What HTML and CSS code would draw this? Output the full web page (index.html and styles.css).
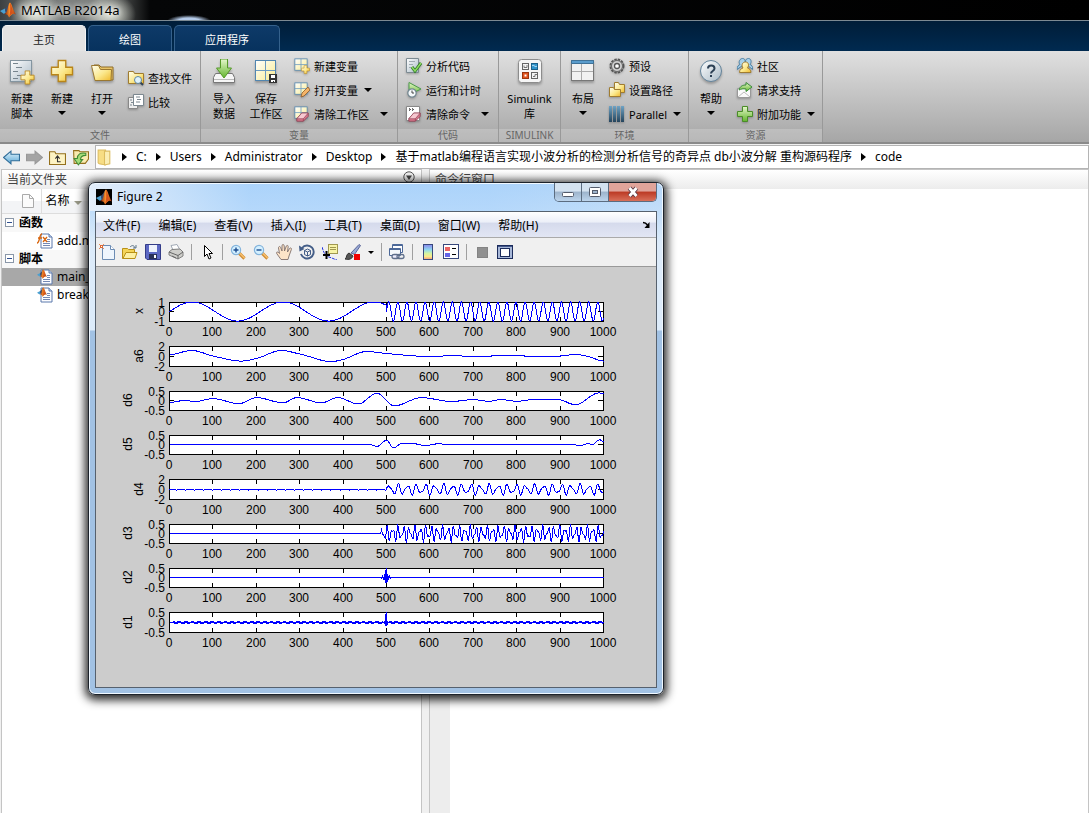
FILE: index.html
```html
<!DOCTYPE html>
<html lang="zh-CN">
<head>
    <meta charset="UTF-8">
    <meta name="viewport" content="width=device-width, initial-scale=1.0">
    <title>MATLAB R2014a</title>
    <link rel="stylesheet" href="styles.css">
</head>
<body>
    <svg class="defs" aria-hidden="true">
        <defs>
            <linearGradient id="gold" x1="0" y1="0" x2="1" y2="1"><stop offset="0" stop-color="#fffff0"/><stop offset="0.55" stop-color="#fbe88c"/><stop offset="1" stop-color="#efb92c"/></linearGradient>
            <linearGradient id="cells" x1="0" y1="0" x2="1" y2="1"><stop offset="0" stop-color="#ffffff"/><stop offset="1" stop-color="#faec90"/></linearGradient>
            <linearGradient id="paper" x1="0" y1="0" x2="1" y2="1"><stop offset="0" stop-color="#ffffff"/><stop offset="1" stop-color="#a9bac6"/></linearGradient>
            <linearGradient id="green" x1="0" y1="0" x2="0" y2="1"><stop offset="0" stop-color="#e6f8cc"/><stop offset="1" stop-color="#62b52c"/></linearGradient>
            <linearGradient id="flame" x1="0" y1="0" x2="1" y2="0"><stop offset="0" stop-color="#7a1408"/><stop offset="0.5" stop-color="#ff9a2e"/><stop offset="1" stop-color="#a32a0c"/></linearGradient>
            <linearGradient id="blue" x1="0" y1="0" x2="0" y2="1"><stop offset="0" stop-color="#e2f4fd"/><stop offset="1" stop-color="#5aa8d6"/></linearGradient>
            <linearGradient id="bars" x1="0" y1="0" x2="0" y2="1"><stop offset="0" stop-color="#6fa3c4"/><stop offset="1" stop-color="#24445c"/></linearGradient>
            <linearGradient id="rainbow" x1="0" y1="0" x2="0" y2="1"><stop offset="0" stop-color="#8a86ec"/><stop offset="0.35" stop-color="#8fd8f0"/><stop offset="0.6" stop-color="#d4f4a0"/><stop offset="0.8" stop-color="#fbe88a"/><stop offset="1" stop-color="#f29a7a"/></linearGradient>
            <symbol id="i-matlab" viewBox="0 0 16 16">
                <path d="M0 9l5-2.500L7.500 9 4 12z" fill="#4a9fd0"/>
                <path d="M5 6.500C7 6 8 2 10 .500L8 9l-2 2-1-2z" fill="#3a4c6c"/>
                <path d="M4 12c1 0 2-1 3-3 1-3 1.500-8 3-8.500 2 1 3 8 6 12-3-1.500-4-.500-7 3C8.500 13 6.500 12 4 12z" fill="url(#flame)"/>
                <path d="M10 .500c1.200 2 2.500 7 3 11-1.500 0-2.500 2-4 4 1.500-5 1.500-10 1-15z" fill="#d4521c"/>
            </symbol>
            <symbol id="i-grid" viewBox="0 0 16 16">
                <rect x="1" y="1" width="14" height="13" fill="url(#cells)" stroke="#5286b0" stroke-width=".900"/>
                <path d="M8 1v13M1 7.500h14" stroke="#6b9ac0" stroke-width=".900"/>
            </symbol>
            <symbol id="i-plus" viewBox="0 0 16 16">
                <path d="M5.500 1h5v4.500H15v5h-4.500V15h-5v-4.500H1v-5h4.500z" fill="url(#gold)" stroke="#b98518" stroke-width=".900"/>
            </symbol>
            <symbol id="i-eraser" viewBox="0 0 16 16">
                <path d="M1 12l6-7h8v4l-6 6H1z" fill="#d8788c" stroke="#8c3c50"/>
                <path d="M1 12l6-7h8l-6 7z" fill="#f6c8d0" stroke="#8c3c50" stroke-width=".800"/>
                <path d="M9 12v3" stroke="#8c3c50" stroke-width=".800"/>
            </symbol>
            <symbol id="i-mfile" viewBox="0 0 16 16">
                <path d="M4 1h8l3 3v11H4z" fill="#fdfdff" stroke="#5a78ac"/>
                <path d="M12 1v3h3" fill="#cfdcf0" stroke="#5a78ac"/>
                <path d="M6 10.500h7M6 12.500h7M10 6.500h3M10 8.500h3" stroke="#7488b4"/>
            </symbol>
            <symbol id="i-lens" viewBox="0 0 16 16">
                <path d="M9 9l5.500 5.500" stroke="#d08c30" stroke-width="3.200"/>
                <path d="M9.500 9l5 5" stroke="#f8c070" stroke-width="1.400"/>
                <circle cx="6" cy="6" r="4.600" fill="#d4f0ff" stroke="#84b4dc" stroke-width="1.200"/>
            </symbol>
        </defs>
    </svg>

    <header class="titlebar">
        <svg class="icon16"><use href="#i-matlab"/></svg>
        <h1>MATLAB R2014a</h1>
    </header>

    <nav class="tabs">
        <button class="tab active">主页</button>
        <button class="tab">绘图</button>
        <button class="tab wide">应用程序</button>
    </nav>

    <div class="ribbon">
        <section class="group g-file">
            <div class="tools">
                <button class="big">
                    <svg viewBox="0 0 28 28"><rect x="2.500" y="1.500" width="21" height="21" fill="url(#paper)" stroke="#8495a0"/><path d="M5 4.500h5M8 8.500h6M5 12.500h5M9 16.500h4M5 19.500h5" stroke="#77858e"/><use href="#i-plus" x="12" y="11" width="15" height="15"/></svg>
                    <span>新建<br>脚本</span>
                </button>
                <button class="big">
                    <svg viewBox="0 0 28 28"><use href="#i-plus" x="2" y="0" width="24" height="24"/></svg>
                    <span>新建</span><i class="caret"></i>
                </button>
                <button class="big">
                    <svg viewBox="0 0 28 28"><path d="M6 6h5l2 2h12v13H8z" fill="#e8c468" stroke="#8f6c28"/><path d="M3.500 6.500h7l2 4h11l-.500 11h-16z" fill="url(#gold)" stroke="#9a7730"/></svg>
                    <span>打开</span><i class="caret"></i>
                </button>
                <div class="stack pair">
                    <button class="small"><svg viewBox="0 0 16 16"><path d="M.500 1.500h5l1 2h9v10H.500z" fill="url(#gold)" stroke="#a07c30"/><path d="M12 12l3 3" stroke="#345" stroke-width="2"/><circle cx="10" cy="10" r="3.500" fill="#dff2fc" stroke="#5c86a4"/></svg>查找文件</button>
                    <button class="small"><svg viewBox="0 0 16 16"><path d="M.500 3.500h9v11h-9z" fill="#eee" stroke="#888"/><path d="M5.500.500h10v11h-10z" fill="#fff" stroke="#7c8890"/><path d="M8 3h4M9 5.500h4M8 8h4M2 6h2M3 8.500h2M2 11h2" stroke="#7c8890"/></svg>比较</button>
                </div>
            </div>
            <h2>文件</h2>
        </section>

        <section class="group g-var">
            <div class="tools">
                <button class="big">
                    <svg viewBox="0 0 28 28"><path d="M5.500 14.500h17l2 4v5h-21v-5z" fill="#f6f6f6" stroke="#777"/><path d="M4 20.500h20" stroke="#bbb"/><path d="M10.500 0h7v9h4l-7.500 10L6.500 9h4z" fill="url(#green)" stroke="#559a28"/></svg>
                    <span>导入<br>数据</span>
                </button>
                <button class="big">
                    <svg viewBox="0 0 28 28"><rect x="3.500" y="1.500" width="20" height="20" fill="url(#cells)" stroke="#5286b0"/><path d="M13.500 2v19M4 11.500h19" stroke="#6b9ac0"/><path d="M17 15h8v9h-8z" fill="#333"/><path d="M19 16h4v3h-4zM19 21h4v2h-1v-1h-1v1h-2z" fill="#fff"/></svg>
                    <span>保存<br>工作区</span>
                </button>
                <div class="stack">
                    <button class="small"><svg viewBox="0 0 16 16"><use href="#i-grid" x="0" y="0" width="14" height="14"/><use href="#i-plus" x="7" y="7" width="9" height="9"/></svg>新建变量</button>
                    <button class="small"><svg viewBox="0 0 16 16"><use href="#i-grid" x="0" y="0" width="14" height="14"/><path d="M7 15l1-4 6-6 2 3-6 6z" fill="#f4b468" stroke="#8a5a28" stroke-width=".800"/></svg>打开变量<i class="caret"></i></button>
                    <button class="small split"><svg viewBox="0 0 16 16"><use href="#i-grid" x="0" y="0" width="14" height="14"/><use href="#i-eraser" x="1" y="3" width="15" height="13"/></svg>清除工作区<i class="caret"></i></button>
                </div>
            </div>
            <h2>变量</h2>
        </section>

        <section class="group g-code">
            <div class="tools">
                <div class="stack">
                    <button class="small"><svg viewBox="0 0 16 16"><path d="M.500.500h12v14H.500z" fill="url(#paper)" stroke="#7c8a92"/><path d="M3 3.500h6M3 6.500h4M3 9.500h3" stroke="#a0abb2"/><path d="M6 9l3 4 6-8" fill="none" stroke="#2f7a2a" stroke-width="3"/><path d="M6 9l3 4 6-8" fill="none" stroke="#8fdc60" stroke-width="1.400"/></svg>分析代码</button>
                    <button class="small"><svg viewBox="0 0 16 16"><path d="M3 .500l12 6.500-12 6z" fill="url(#green)" stroke="#4a9a48"/><circle cx="6" cy="11" r="4.200" fill="#f4f8fa" stroke="#71858f" stroke-width="1.200"/><path d="M6 8.500V11h2" fill="none" stroke="#444"/></svg>运行和计时</button>
                    <button class="small split"><svg viewBox="0 0 16 16"><path d="M.500.500h13v14H.500z" fill="#fff" stroke="#888"/><path d="M3 2.500l1.500 1L3 4.500M6 2.500l1.500 1L6 4.500" fill="none" stroke="#222"/><use href="#i-eraser" x="1" y="3" width="15" height="13"/></svg>清除命令<i class="caret"></i></button>
                </div>
            </div>
            <h2>代码</h2>
        </section>

        <section class="group g-sim">
            <div class="tools">
                <button class="big wide">
                    <svg viewBox="0 0 28 28"><rect x="2.500" y=".500" width="23" height="23" rx="3" fill="#f6f6f6" stroke="#8c8c8c"/><rect x="6.500" y="4.500" width="6" height="6" fill="#f4f4f4" stroke="#666"/><rect x="15.500" y="4.500" width="6" height="6" fill="#2f94cc" stroke="#1c5f88"/><rect x="6.500" y="13.500" width="6" height="6" fill="#e0521c" stroke="#9a3410"/><rect x="15.500" y="13.500" width="6" height="6" fill="#f4f4f4" stroke="#666"/><path d="M8 6.500v2h3V6M17 17.500h2v-2h2" fill="none" stroke="#777"/><path d="M16 7c2-2 3 2 5 0" fill="none" stroke="#d0ecfc"/><rect x="8.500" y="15.500" width="2" height="2" fill="#fff"/></svg>
                    <span>Simulink<br>库</span>
                </button>
            </div>
            <h2>SIMULINK</h2>
        </section>

        <section class="group g-env">
            <div class="tools">
                <button class="big">
                    <svg viewBox="0 0 28 28"><rect x="2.500" y="1.500" width="22" height="20" fill="#f1f1f1" stroke="#777"/><path d="M2.500 1.500h22v3h-22z" fill="#5a9ccc" stroke="#3f7298"/><path d="M3 12.500h21M12.500 5v16" stroke="#aaa"/></svg>
                    <span>布局</span><i class="caret"></i>
                </button>
                <div class="stack">
                    <button class="small"><svg viewBox="0 0 16 16"><circle cx="8" cy="8" r="6.500" fill="none" stroke="#555" stroke-width="2" stroke-dasharray="2.400 1"/><circle cx="8" cy="8" r="5.500" fill="#d0d0d0" stroke="#666"/><circle cx="8" cy="8" r="2.500" fill="#fff" stroke="#555" stroke-width="1.300"/></svg>预设</button>
                    <button class="small"><svg viewBox="0 0 16 16"><path d="M5.500.500h4l1 2h5v8h-10z" fill="url(#gold)" stroke="#a07c30"/><path d="M.500 5.500h4l1 2h6v7H.500z" fill="url(#gold)" stroke="#a07c30"/></svg>设置路径</button>
                    <button class="small"><svg viewBox="0 0 16 16"><path d="M0 0h3v16H0zM4 0h3v16H4zM8 0h3v16H8zM12 0h3v16h-3z" fill="url(#bars)"/></svg>Parallel<i class="caret"></i></button>
                </div>
            </div>
            <h2>环境</h2>
        </section>

        <section class="group g-res">
            <div class="tools">
                <button class="big">
                    <svg viewBox="0 0 28 28"><circle cx="14" cy="12" r="10.500" fill="url(#paper)" stroke="#64839a"/><path d="M11 9.500c0-4 6.500-4 6.500 0 0 2.500-3.500 2.500-3.500 5" fill="none" stroke="#2c4054" stroke-width="2"/><path d="M13 16h2v2h-2z" fill="#2c4054"/></svg>
                    <span>帮助</span><i class="caret"></i>
                </button>
                <div class="stack">
                    <button class="small"><svg viewBox="0 0 16 16"><path d="M0 11.500C0 8 2 7 3 6.500 1 4 3 .500 5.500.500S9 3 7.500 6z" fill="#a8d0ea" stroke="#4c80a4"/><path d="M9 6C7.500 3 9 .500 11.500.500S15 4 13 6.500c1.500.500 3 2 2.500 5z" fill="#a8d0ea" stroke="#4c80a4"/><path d="M2.500 14.500c0-3 2-4 3.500-4.500-2-3-.500-6 2.500-6s4 3 2 6c2 .500 3.500 2 3.500 4.500z" fill="url(#gold)" stroke="#a07c30"/></svg>社区</button>
                    <button class="small"><svg viewBox="0 0 16 16"><path d="M.500 6.500h13v9H.500z" fill="#fafafa" stroke="#999"/><path d="M1 15l6-5 6 5" fill="none" stroke="#bbb"/><path d="M2 8c1-4 4-5 7-5V.500l6 4.500-6 4.500V7C6 6.500 4 7 2 8z" fill="url(#green)" stroke="#3a8c3a"/></svg>请求支持</button>
                    <button class="small"><svg viewBox="0 0 16 16"><path d="M5.500.500h5v5h5v5h-5v5h-5v-5h-5v-5h5z" fill="url(#green)" stroke="#4a8c28"/></svg>附加功能<i class="caret"></i></button>
                </div>
            </div>
            <h2>资源</h2>
        </section>
    </div>

    <div class="pathbar">
        <div class="nav-buttons">
            <button aria-label="后退"><svg viewBox="0 0 16 16"><path d="M.500 8l7-6v3h8v6h-8v3z" fill="url(#blue)" stroke="#2f6c98"/></svg></button>
            <button aria-label="前进"><svg viewBox="0 0 16 16"><path d="M15.500 8l-7-6v3h-8v6h8v3z" fill="#a4a4a4" stroke="#999"/></svg></button>
            <button aria-label="向上一级"><svg viewBox="0 0 16 16"><path d="M.500 2.500h5l1 2h9v10H.500z" fill="#fdf3c4" stroke="#94701c"/><path d="M8 7v5h3M6 9l2-2.500L10 9" fill="none" stroke="#333"/></svg></button>
            <button aria-label="浏览文件夹"><svg viewBox="0 0 16 16"><path d="M1.500 1.500h5l1 1h8v7l-3 4H2z" fill="#f9ebb0" stroke="#94701c"/><path d="M13 4C8 3 5 5 5 9H2l4 6 4-5H8c0-3 2-4 5-4z" fill="#a4dc78" stroke="#3f8a34"/></svg></button>
        </div>
        <div class="crumbs">
            <svg viewBox="0 0 16 16"><path d="M2 1h7v14l-6-1-1-1z" fill="#f7dd84" stroke="#dcbc60"/><path d="M8 2h5v12l-5 1z" fill="#fbeeb4" stroke="#dcbc60"/></svg>
            <a href="#">C:</a>
            <a href="#">Users</a>
            <a href="#">Administrator</a>
            <a href="#">Desktop</a>
            <a href="#">基于matlab编程语言实现小波分析的检测分析信号的奇异点 db小波分解 重构源码程序</a>
            <a href="#">code</a>
        </div>
    </div>

    <main class="workspace">
        <section class="panel files">
            <header class="panel-title">
                <h2>当前文件夹</h2>
                <button class="panel-menu" aria-label="面板菜单"><svg viewBox="0 0 12 12"><circle cx="6" cy="6" r="5.200" fill="#f4f4f4" stroke="#555"/><path d="M3 4.500h6L6 9z" fill="#444"/></svg></button>
            </header>
            <table>
                <thead>
                    <tr>
                        <th class="col-icon"><svg class="page" viewBox="0 0 12 14"><path d="M.500.500h7l4 4v9H.500z" fill="#fbfbfb" stroke="#aaa"/><path d="M7.500.500v4h4" fill="none" stroke="#aaa"/></svg></th>
                        <th>名称<i class="caret"></i></th>
                    </tr>
                </thead>
                <tbody>
                    <tr class="branch"><td colspan="2"><i class="minus"></i>函数</td></tr>
                    <tr class="file"><td colspan="2"><svg viewBox="0 0 16 16"><use href="#i-mfile"/><path d="M0 10c3 0 2-9 5-9M1 5h4M6 9l4-5M6 4l4 5" fill="none" stroke="#d8640c" stroke-width="1.300"/></svg>add.m</td></tr>
                    <tr class="branch"><td colspan="2"><i class="minus"></i>脚本</td></tr>
                    <tr class="file selected"><td colspan="2"><svg viewBox="0 0 16 16"><use href="#i-mfile"/><use href="#i-matlab" x="0" y="0" width="10" height="10"/></svg>main_fun.m</td></tr>
                    <tr class="file"><td colspan="2"><svg viewBox="0 0 16 16"><use href="#i-mfile"/><use href="#i-matlab" x="0" y="0" width="10" height="10"/></svg>break.m</td></tr>
                </tbody>
            </table>
        </section>
        <section class="panel console">
            <header class="panel-title"><h2>命令行窗口</h2></header>
            <div class="prompt"></div>
        </section>
    </main>

    <div class="figure-window">
        <header class="caption">
            <span class="logo"><svg class="icon16"><use href="#i-matlab"/></svg></span>
            <h2>Figure 2</h2>
            <div class="window-buttons">
                <button aria-label="最小化"><svg viewBox="0 0 14 12"><rect x="1.500" y="6.500" width="11" height="4" rx="1" fill="#fff" stroke="#545c6c"/></svg></button>
                <button aria-label="最大化"><svg viewBox="0 0 14 12"><rect x="1.500" y="1.500" width="11" height="9" rx="1" fill="#fff" stroke="#545c6c"/><rect x="4.500" y="4.500" width="5" height="3" fill="#9db4cc" stroke="#545c6c"/></svg></button>
                <button class="close" aria-label="关闭"><svg viewBox="0 0 14 12"><path d="M3.500 2l7 8M10.500 2l-7 8" stroke="#5a3a44" stroke-width="4.600"/><path d="M3.500 2l7 8M10.500 2l-7 8" stroke="#fff" stroke-width="2.800"/></svg></button>
            </div>
        </header>
        <div class="client">
            <nav class="menubar">
                <button>文件(F)</button>
                <button>编辑(E)</button>
                <button>查看(V)</button>
                <button>插入(I)</button>
                <button>工具(T)</button>
                <button>桌面(D)</button>
                <button>窗口(W)</button>
                <button>帮助(H)</button>
                <svg class="dock" viewBox="0 0 8 8"><path d="M0 1.500c2 0 3 .500 4.500 2.500" fill="none" stroke="#000" stroke-width="1.500"/><path d="M6.500 1v6h-5z" fill="#000"/></svg>
            </nav>
            <div class="toolbar">
                <button aria-label="新建图窗"><svg viewBox="0 0 16 16"><path d="M3.500 1.500h8l4 4v10h-12z" fill="#eef5fd" stroke="#6c8cb4"/><path d="M11.500 1.500v4h4" fill="#fff" stroke="#6c8cb4"/><path d="M0 0l5 5M5 0L0 5" stroke="#e88a58"/><rect x="1.500" y="1.500" width="2" height="2" fill="#fff" stroke="#e06830"/></svg></button>
                <button aria-label="打开文件"><svg viewBox="0 0 16 16"><path d="M.500 4.500h5l1 1h6v9H.500z" fill="#f4d458" stroke="#b89018"/><path d="M1 14.500l3-6h11l-2 6z" fill="#fdf0a4" stroke="#b89018"/><path d="M8 3c2-2 4-2 5 1M14 1v3h-3" fill="none" stroke="#5c7488"/></svg></button>
                <button aria-label="保存图窗"><svg viewBox="0 0 16 16"><path d="M.500.500h15v15H2l-1.500-1.500z" fill="#5c68c4" stroke="#343c88"/><path d="M4 1h8v7H4z" fill="#eef2fc"/><path d="M4 10h8v5H4z" fill="#2a3058"/><path d="M9 11h2v3H9z" fill="#fff"/></svg></button>
                <button class="ends" aria-label="打印图窗"><svg viewBox="0 0 16 16"><path d="M5 6L3 1.500 9 .500l3 5.500z" fill="#fff" stroke="#a0a8b4"/><path d="M1 8l3-2.500 8-.500 3 3v4l-5 3-9-4z" fill="#cfcfcb" stroke="#808080"/><path d="M1 8l9 3.500L15 8M10 11.500V15M4 12l4 2" fill="none" stroke="#666"/></svg></button>
                <button class="ends" aria-label="编辑绘图"><svg viewBox="0 0 16 16"><path d="M5.500 1.500v11l2.500-2.500 2 5 2-1-2-4.500h3.500z" fill="#fff" stroke="#000"/></svg></button>
                <button aria-label="放大"><svg viewBox="0 0 16 16"><use href="#i-lens"/><path d="M3.500 6h5M6 3.500v5" stroke="#1c4c90" stroke-width="1.400"/></svg></button>
                <button aria-label="缩小"><svg viewBox="0 0 16 16"><use href="#i-lens"/><path d="M3.500 6h5" stroke="#1c4c90" stroke-width="1.400"/></svg></button>
                <button aria-label="平移"><svg viewBox="0 0 16 16"><path d="M5 15.500L.700 9.500c-.700-2 1.300-2 2.800 0L2.500 4c0-2 2-2 2.300 0L6 7V1.800c0-1.800 2-1.800 2.200 0L8.500 7l1.800-5c.800-1.300 2-.500 1.900.700L11.500 8l2-3.500c1-1.300 2.200-.300 1.900.900L13 12l-1 3.500z" fill="#fde4c8" stroke="#80706c" stroke-width=".900"/></svg></button>
                <button aria-label="三维旋转"><svg viewBox="0 0 16 16"><path d="M3 4a6.500 6.500 0 1 1-1 6" fill="none" stroke="#445e88" stroke-width="1.900"/><path d="M0 1.500l.500 6 5-2.500z" fill="#445e88"/><path d="M5.500 6.500l3-1.500 3 1.500v4l-3 1.500-3-1.500zM5.500 6.500l3 1.500 3-1.500M8.500 8v4" fill="none" stroke="#445e88"/></svg></button>
                <button aria-label="数据游标"><svg viewBox="0 0 16 16"><path d="M0 3c2 6 3 9 7 10 3 1 5 2 8 3" fill="none" stroke="#2030e0" stroke-dasharray="3 1"/><rect x="6.500" y=".500" width="9" height="9" fill="#f8f4a8" stroke="#a09850"/><path d="M8 3.500h6M8 5.500h6" stroke="#a09850"/><path d="M4.500 7v8M1 11h7" stroke="#000" stroke-width="2"/></svg></button>
                <button aria-label="刷亮"><svg viewBox="0 0 16 16"><path d="M6 9l8-8.500 1.500 1-6 9z" fill="#98a8d4" stroke="#505c90" stroke-width=".900"/><path d="M0 15c2-1 1-5 4-6l4 3c-1 3-4 4-8 3z" fill="#555" stroke="#333"/><rect x="9" y="10" width="6" height="6" fill="#f00000"/></svg></button>
                <button class="more ends" aria-label="刷亮选项"><i class="caret"></i></button>
                <button class="ends" aria-label="链接绘图"><svg viewBox="0 0 16 16"><path d="M3.500.500h10v8h-10z" fill="#fff" stroke="#4c6898"/><path d="M.500 4.500h11v7H.500z" fill="#f4f8fc" stroke="#4c6898"/><path d="M1 5.500h10M4 1.500h9" stroke="#4c6898"/><rect x="3" y="10.500" width="7" height="4" rx="2" fill="#eef" stroke="#60708c" stroke-width="1.300"/><rect x="8" y="10.500" width="7" height="4" rx="2" fill="none" stroke="#60708c" stroke-width="1.300"/></svg></button>
                <button aria-label="插入颜色栏"><svg viewBox="0 0 16 16"><rect x="3.500" y=".500" width="9" height="15" fill="url(#rainbow)" stroke="#38487c"/></svg></button>
                <button class="ends" aria-label="插入图例"><svg viewBox="0 0 16 16"><rect x=".500" y=".500" width="15" height="14" fill="#fff" stroke="#38487c"/><path d="M2 3h5v4H2z" fill="#ec6464"/><path d="M2 9h5v4H2z" fill="#6464e8"/><path d="M9 4.500h4M9 10.500h4" stroke="#000"/></svg></button>
                <button aria-label="隐藏绘图工具"><svg viewBox="0 0 16 16"><rect x="3.500" y="3.500" width="10" height="10" fill="#909090" stroke="#848484"/></svg></button>
                <button aria-label="显示绘图工具"><svg viewBox="0 0 16 16"><rect x=".500" y="1.500" width="15" height="13" fill="#a8b8d8" stroke="#1c2c5c"/><path d="M1 2.500h14" stroke="#44588c"/><rect x="3.500" y="4.500" width="9" height="8" fill="#fff" stroke="#1c2c5c"/></svg></button>
            </div>
            <svg class="plots" id="plots" viewBox="0 0 560 420" role="img" aria-label="小波分解"></svg>
        </div>
    </div>

    <script src="script.js"></script>
</body>
</html>
```

FILE: styles.css
```css
* {
    box-sizing: border-box;
}
body {
    margin: 0;
    min-height: 100vh;
    display: flex;
    flex-direction: column;
    font-family: "Noto Sans", "Noto Sans CJK SC", sans-serif;
    font-size: 12px;
    line-height: 18px;
    color: #000;
    background-color: #f0f0f0;
}
h1, h2 {
    margin: 0;
    font-size: 12px;
    font-weight: normal;
}
button {
    margin: 0;
    padding: 0;
    border: none;
    background: none;
    font-family: inherit;
    font-size: inherit;
    color: inherit;
}
svg {
    display: block;
    flex: none;
}
.defs {
    position: absolute;
    width: 0;
    height: 0;
}
.icon16 {
    width: 16px;
    height: 16px;
}
.caret {
    border: 4px solid transparent;
    border-top-color: #000;
    border-bottom: none;
}

/* main window caption */
.titlebar {
    height: 21px;
    display: flex;
    align-items: center;
    gap: 5px;
    border-bottom: 1px solid #7d8a93;
    background:
        radial-gradient(ellipse 22px 6px at 189px 21px, #b4cae8 50%, transparent),
        radial-gradient(ellipse 26px 22px at 36px 14px, #e4e8dc, transparent),
        radial-gradient(ellipse 26px 20px at 110px 14px, #e4e8dc, transparent),
        linear-gradient(to right, #3c4042, #767978 40px, #7d807e 100px, #050607 150px, #000);
}
.titlebar h1 {
    font-size: 13px;
    text-shadow: 0 0 5px #fff, 0 0 8px #ddd;
}

/* toolstrip */
.tabs {
    height: 30px;
    padding: 4px 2px 0;
    display: flex;
    gap: 2px;
    background: linear-gradient(#001d38, #002a50);
}
.tab {
    width: 84px;
    border: 1px solid #35618c;
    border-bottom: none;
    border-radius: 5px 5px 0 0;
    background: linear-gradient(#0e3a68, #07325e);
    color: #fff;
    font-size: 11px;
}
.tab.wide {
    width: 106px;
}
.tab.active {
    border-color: #f4f4f4;
    background: #e3e3e3;
    color: #222;
}
.ribbon {
    height: 93px;
    display: flex;
    border-bottom: 2px solid #8a8a8a;
    background: linear-gradient(#e0e0e0, #a6a6a6);
    font-size: 11px;
    line-height: 15px;
}
.group {
    display: flex;
    flex-direction: column;
    border-right: 1px solid #999;
}
.group h2 {
    height: 13px;
    background-color: rgba(255, 255, 255, 0.2);
    color: #666;
    font-size: 10px;
    line-height: 13px;
    text-align: center;
}
.g-file { width: 201px; }
.g-var { width: 197px; }
.g-code { width: 101px; }
.g-sim { width: 62px; }
.g-env { width: 128px; }
.g-res { width: 134px; }
.tools {
    flex: 1;
    display: flex;
    padding: 3px 2px 0;
}
.big {
    width: 40px;
    padding-top: 5px;
    display: flex;
    flex-direction: column;
    align-items: center;
    white-space: nowrap;
    line-height: 15px;
}
.big.wide {
    width: 58px;
}
.big svg {
    width: 28px;
    height: 28px;
    margin-bottom: 4px;
    filter: drop-shadow(0 2px 1px rgba(0, 0, 0, 0.25));
}
.big .caret {
    margin-top: 5px;
}
.stack {
    display: flex;
    flex-direction: column;
    padding-left: 6px;
}
.stack.pair {
    padding-top: 12px;
}
.small {
    height: 24px;
    display: flex;
    align-items: center;
    gap: 4px;
    white-space: nowrap;
}
.small svg {
    width: 16px;
    height: 16px;
    filter: drop-shadow(0 1px 1px rgba(0, 0, 0, 0.25));
}
.small .caret {
    margin-left: 2px;
}
.small.split .caret {
    margin-left: 7px;
}
.g-var .big {
    width: 42px;
}
.g-var .stack {
    padding-left: 7px;
}

/* address bar */
.pathbar {
    height: 24px;
    display: flex;
    margin-top: 1px;
}
.nav-buttons {
    display: flex;
    align-items: center;
    gap: 6px;
    padding: 0 6px 0 3px;
}
.nav-buttons svg,
.crumbs svg {
    width: 17px;
    height: 17px;
}
.crumbs {
    flex: 1;
    display: flex;
    align-items: center;
    border: 1px solid #b4b4b4;
    background-color: #fff;
    white-space: nowrap;
    overflow: hidden;
}
.crumbs a {
    display: flex;
    align-items: center;
    color: #000;
    text-decoration: none;
}
.crumbs a::before {
    content: "";
    margin: 0 9px;
    border: 4px solid transparent;
    border-left: 5px solid #000;
    border-right: none;
}

/* docked panels */
.workspace {
    flex: 1;
    display: flex;
    gap: 7px;
    padding-left: 1px;
}
.panel {
    display: flex;
    flex-direction: column;
    border: 1px solid #c4c4c4;
    border-bottom: none;
    background-color: #fff;
}
.panel-title {
    height: 19px;
    display: flex;
    align-items: center;
    justify-content: space-between;
    padding: 0 6px 0 5px;
    background: linear-gradient(#fff, #ececec);
    color: #444;
}
.panel-title h2 {
    line-height: 16px;
}
.panel-menu {
    align-self: flex-start;
    padding-top: 1px;
}
.panel-menu svg {
    width: 12px;
    height: 12px;
}
.files {
    width: 421px;
    max-width: 50%;
}
.files table {
    width: 100%;
    border-collapse: collapse;
}
.files th {
    height: 24px;
    padding: 0 4px;
    border-bottom: 1px solid #ddd;
    background: linear-gradient(#fff 50%, #f3f4f6 50%);
    font-weight: normal;
    text-align: left;
}
.files .col-icon {
    width: 39px;
    padding: 0 6px 0 20px;
    border-right: 1px solid #ddd;
}
.files th .caret {
    display: inline-block;
    margin-left: 4px;
    border-top-color: #999988;
}
.page {
    width: 12px;
    height: 14px;
}
.files td {
    height: 18px;
    padding: 0;
    line-height: 18px;
    vertical-align: middle;
}
.branch {
    font-weight: bold;
    background-color: #f8f8f8;
}
.minus {
    display: inline-block;
    width: 9px;
    height: 9px;
    margin: 0 5px 0 3px;
    border: 1px solid #8a97a8;
    background: linear-gradient(#2f4f8f, #2f4f8f) center / 5px 1px no-repeat #fff;
}
.file svg {
    float: left;
    width: 16px;
    height: 16px;
    margin: 1px 4px 0 35px;
}
.selected {
    background-color: #a8a8a8;
}
.console {
    flex: 1;
}
.prompt {
    flex: 1;
    border-left: 20px solid #ededed;
}

/* floating figure window */
.figure-window {
    position: absolute;
    left: 88px;
    top: 182px;
    padding: 0 6px 6px;
    border: 1px solid #1d232b;
    border-radius: 7px;
    background:
        linear-gradient(to right, rgba(232, 240, 250, 0.9), rgba(173, 213, 252, 0.6) 160px, rgba(173, 213, 252, 0.6) 400px, rgba(200, 224, 248, 0.4)) top / 100% 28px no-repeat,
        linear-gradient(#a9d0f8, #dcebfa 60px, #dcebfa 147px, #a2c2e4 148px);
    box-shadow: inset 0 0 0 1px #f0f8ff, 0 2px 10px 3px rgba(0, 0, 0, 0.85);
}
.caption {
    height: 28px;
    display: flex;
    align-items: center;
    gap: 5px;
    padding-left: 1px;
}
.caption h2 {
    flex: 1;
}
.logo {
    background-color: #000;
}
.window-buttons {
    align-self: flex-start;
    display: flex;
    border: 1px solid #5b6c80;
    border-top: none;
    border-radius: 0 0 5px 5px;
    overflow: hidden;
}
.window-buttons button {
    width: 27px;
    height: 18px;
    display: grid;
    place-items: center;
    border-right: 1px solid #5b6c80;
    background: linear-gradient(#d4e2f0 45%, #9db4cc 50%, #bcd4ec);
}
.window-buttons .close {
    width: 47px;
    border-right: none;
    background: linear-gradient(#e0a49a 45%, #bc3a24 50%, #d8705a);
}
.window-buttons svg {
    width: 14px;
    height: 12px;
}
.client {
    border: 1px solid #56616e;
    background-color: #ccc;
}
.menubar {
    height: 26px;
    display: flex;
    align-items: center;
    gap: 18px;
    padding: 0 5px 0 7px;
    border-bottom: 1px solid #aaa;
    background: linear-gradient(#fff, #eceff8 40%, #d5daec 45%, #e2e6f4);
}
.dock {
    width: 8px;
    height: 8px;
    margin-left: auto;
}
.toolbar {
    height: 29px;
    display: flex;
    align-items: center;
    gap: 7px;
    padding: 0 3px;
    border-bottom: 1px solid #999;
    background-color: #f0f0f0;
}
.toolbar svg {
    width: 16px;
    height: 16px;
}
.toolbar .ends {
    padding-right: 7px;
    border-right: 1px solid #a0a0a0;
}
.toolbar .more {
    height: 18px;
    display: flex;
    align-items: center;
}
.more .caret {
    border-width: 3px;
    border-bottom: none;
}
.plots {
    width: 560px;
    height: 420px;
    font-family: "Liberation Sans", Arial, sans-serif;
    font-size: 12px;
}
.plots .box {
    fill: #fff;
    stroke: #000;
    shape-rendering: crispEdges;
}
.plots .ticks {
    stroke: #000;
    shape-rendering: crispEdges;
}
.plots .line {
    fill: none;
    stroke: #0000ff;
    shape-rendering: crispEdges;
}
.x-label,
.y-name {
    text-anchor: middle;
}
.y-label {
    text-anchor: end;
}
```

FILE: script.js
```js
const svg = document.getElementById('plots');
const NS = 'http://www.w3.org/2000/svg';
const LEFT = 73;
const WIDTH = 434;

// Smooth curve through a short list of [t, value] knots
function knots(points) {
    const slope = points.map((p, i) => {
        if (i === 0 || i === points.length - 1) return 0;
        const a = (p[1] - points[i - 1][1]) / (p[0] - points[i - 1][0]);
        const b = (points[i + 1][1] - p[1]) / (points[i + 1][0] - p[0]);
        return a * b > 0 ? (a + b) / 2 : 0;
    });
    return t => {
        let i = 0;
        while (i < points.length - 2 && t > points[i + 1][0]) i++;
        const [t0, v0] = points[i];
        const [t1, v1] = points[i + 1];
        const h = t1 - t0;
        const k = (t - t0) / h;
        return v0 * (2 * k ** 3 - 3 * k ** 2 + 1) + v1 * (3 * k ** 2 - 2 * k ** 3)
            + h * slope[i] * (k ** 3 - 2 * k ** 2 + k) + h * slope[i + 1] * (k ** 3 - k ** 2);
    };
}

const a6 = knots([[0, .4], [52, 1.2], [100, .1], [165, -.9], [200, -.4], [258, 1.2], [300, .5], [373, -1], [400, -.6], [454, 1], [500, .6], [570, .1], [610, 0], [650, .2], [700, 0], [780, .2], [860, 0], [900, .1], [937, .4], [965, 0], [1000, -.9]]);
const d6 = knots([[0, -.1], [35, 0], [60, -.05], [100, .1], [160, -.17], [200, .15], [262, -.12], [293, .15], [350, -.12], [388, .15], [435, -.18], [478, .38], [518, -.28], [580, .15], [650, -.05], [700, .05], [735, -.04], [765, .05], [800, -.04], [840, .05], [895, .05], [935, -.22], [990, .4], [1000, .35]]);
const d5 = knots([[0, 0], [460, 0], [478, -.1], [500, .22], [516, -.18], [535, .05], [560, .05], [590, -.05], [620, .04], [640, 0], [930, 0], [945, -.06], [965, .04], [975, 0], [991, .25], [1000, .15]]);

const x = t => t < 500 ? Math.sin(0.03 * t) : Math.sin(0.3 * (t - 500));
function d4(t) {
    if (t < 500) return 0.1 * Math.sin(0.3 * t);
    const u = t - 500;
    return 0.85 * Math.sin(0.3 * u - 0.3) + 0.35 * Math.sin(0.48 * u + 1);
}
function d3(t) {
    if (t < 488) return 0;
    const u = t - 500;
    return 0.28 * Math.sin(0.49 * u + 1) + 0.16 * Math.sin(0.79 * u);
}
function burst(t, spread) {
    return 0.5 * Math.exp(-Math.abs(t - 499) / spread) * Math.cos(1.6 * (t - 499));
}
const d2 = t => burst(t, 4);
const d1 = t => burst(t, 2) + (t > 8 ? 0.02 * (t % 2 ? 1 : -1) : 0);

const axes = [
    { name: 'x', top: 35, bottom: 54, limit: 1, f: x },
    { name: 'a6', top: 79, bottom: 99, limit: 2, f: a6 },
    { name: 'd6', top: 124, bottom: 143, limit: 0.5, f: d6 },
    { name: 'd5', top: 168, bottom: 187, limit: 0.5, f: d5 },
    { name: 'd4', top: 212, bottom: 232, limit: 2, f: d4 },
    { name: 'd3', top: 257, bottom: 276, limit: 0.5, f: d3 },
    { name: 'd2', top: 301, bottom: 320, limit: 0.5, f: d2 },
    { name: 'd1', top: 345, bottom: 365, limit: 0.5, f: d1 }
];

function add(tag, attrs, text) {
    const el = document.createElementNS(NS, tag);
    for (const key in attrs) el.setAttribute(key, attrs[key]);
    if (text !== undefined) el.textContent = text;
    svg.appendChild(el);
}

axes.forEach(({ name, top, bottom, limit, f }) => {
    const middle = Math.floor((top + bottom) / 2);
    add('rect', { class: 'box', x: LEFT + 0.5, y: top + 0.5, width: WIDTH, height: bottom - top });

    let ticks = `M${LEFT} ${middle + 0.5}h5M${LEFT + WIDTH} ${middle + 0.5}h-5`;
    for (let t = 0; t <= 1000; t += 100) {
        const px = LEFT + Math.round(t / 1000 * WIDTH);
        ticks += `M${px + 0.5} ${top}v5M${px + 0.5} ${bottom + 1}v-5`;
        add('text', { class: 'x-label', x: px, y: bottom + 15 }, t);
    }
    add('path', { class: 'ticks', d: ticks });

    const points = [];
    for (let t = 0; t <= 1000; t++) {
        const y = middle + 0.5 - f(t) / limit * (bottom - top) / 2;
        points.push((LEFT + 0.5 + t / 1000 * WIDTH).toFixed(1) + ',' + y.toFixed(1));
    }
    add('polyline', { class: 'line', points: points.join(' ') });

    add('text', { class: 'y-label', x: LEFT - 4, y: top + 5 }, limit);
    add('text', { class: 'y-label', x: LEFT - 4, y: middle + 5 }, 0);
    add('text', { class: 'y-label', x: LEFT - 4, y: bottom + 5 }, -limit);
    const nameX = limit < 1 ? 36 : 47;
    add('text', { class: 'y-name', transform: `translate(${nameX} ${middle}) rotate(-90)` }, name);
});
```
